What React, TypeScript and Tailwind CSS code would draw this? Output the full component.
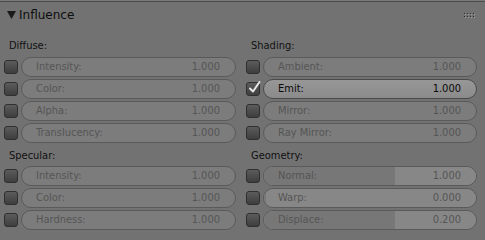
import React from "react";

type Row = { label: string; value: string; checked?: boolean; active?: boolean; fill?: number };

const diffuse: Row[] = [
  { label: "Intensity:", value: "1.000" },
  { label: "Color:", value: "1.000" },
  { label: "Alpha:", value: "1.000" },
  { label: "Translucency:", value: "1.000" },
];

const specular: Row[] = [
  { label: "Intensity:", value: "1.000" },
  { label: "Color:", value: "1.000" },
  { label: "Hardness:", value: "1.000" },
];

const shading: Row[] = [
  { label: "Ambient:", value: "1.000" },
  { label: "Emit:", value: "1.000", checked: true, active: true },
  { label: "Mirror:", value: "1.000" },
  { label: "Ray Mirror:", value: "1.000" },
];

const geometry: Row[] = [
  { label: "Normal:", value: "1.000", fill: 62 },
  { label: "Warp:", value: "0.000", fill: 1 },
  { label: "Displace:", value: "0.200", fill: 62 },
];

function Checkbox({ checked }: { checked?: boolean }) {
  return (
    <div className="relative w-[14px] h-[14px] shrink-0 rounded-[3px] border border-[#2f2f2f] bg-gradient-to-b from-[#5c5c5c] to-[#3e3e3e]">
      {checked && (
        <svg className="absolute -top-[3px] left-[1px]" width="14" height="14" viewBox="0 0 14 14">
          <path d="M2 8.5 L5 11.5 L11.5 2" fill="none" stroke="#e6e6e6" strokeWidth="2" strokeLinecap="round" strokeLinejoin="round" />
        </svg>
      )}
    </div>
  );
}

function Field({ row }: { row: Row }) {
  if (row.active) {
    return (
      <div className="flex-1 h-[20px] rounded-full border border-[#4a4a4a] bg-gradient-to-b from-[#979797] to-[#8b8b8b] flex items-center justify-between pl-[14px] pr-[15px] text-[#0a0a0a]">
        <span>{row.label}</span>
        <span>{row.value}</span>
      </div>
    );
  }
  return (
    <div className="relative flex-1 h-[20px] rounded-full border border-[#5a5a5a] bg-[#7c7c7c] overflow-hidden flex items-center justify-between pl-[14px] pr-[15px] text-[#555555]">
      {row.fill !== undefined && (
        <>
          <div className="absolute inset-0 bg-[#878787]" />
          <div className="absolute left-0 top-0 bottom-0 bg-[#777777]" style={{ width: `${row.fill}%` }} />
        </>
      )}
      <span className="relative">{row.label}</span>
      <span className="relative">{row.value}</span>
    </div>
  );
}

function Section({ title, rows, top }: { title: string; rows: Row[]; top?: boolean }) {
  return (
    <div className="flex flex-col">
      <div className={`${top ? "h-[28px] pb-[3px]" : "h-[21px] pb-[2px]"} flex items-end pl-[5px] text-[#111111]`}>
        {title}
      </div>
      {rows.map((r) => (
        <div key={r.label} className="h-[22px] flex items-center gap-[3px]">
          <Checkbox checked={r.checked} />
          <Field row={r} />
        </div>
      ))}
    </div>
  );
}

export default function App() {
  return (
    <div className="w-[485px] h-[240px] bg-[#727272] overflow-hidden font-['DejaVu_Sans_Condensed','DejaVu_Sans',sans-serif] text-[11px] leading-[14px]">
      <div className="h-px bg-[#7a7a7a]" />
      <div className="h-px bg-[#4c4c4c]" />
      <div className="h-[26px] flex items-center pl-[7px] pr-[10px] font-['DejaVu_Sans',sans-serif] text-[11px] text-[#0e0e0e]">
        <svg width="9" height="8" viewBox="0 0 9 8" className="mr-[3px]">
          <polygon points="0,0 9,0 4.5,8" fill="#1a1a1a" />
        </svg>
        <span className="text-[12px]">Influence</span>
        <svg width="11" height="5" viewBox="0 0 11 5" className="ml-auto">
          {[0, 3, 6, 9].map((x) =>
            [0, 3].map((y) => (
              <g key={`${x}-${y}`}>
                <rect x={x} y={y} width="1" height="1" fill="#2e2e2e" />
                <rect x={x + 1} y={y + 1} width="1" height="1" fill="#a0a0a0" />
              </g>
            ))
          )}
        </svg>
      </div>
      <div className="flex gap-[10px] px-[4px]">
        <div className="w-[232px] flex flex-col">
          <Section title="Diffuse:" rows={diffuse} top />
          <Section title="Specular:" rows={specular} />
        </div>
        <div className="w-[231px] flex flex-col">
          <Section title="Shading:" rows={shading} top />
          <Section title="Geometry:" rows={geometry} />
        </div>
      </div>
    </div>
  );
}
